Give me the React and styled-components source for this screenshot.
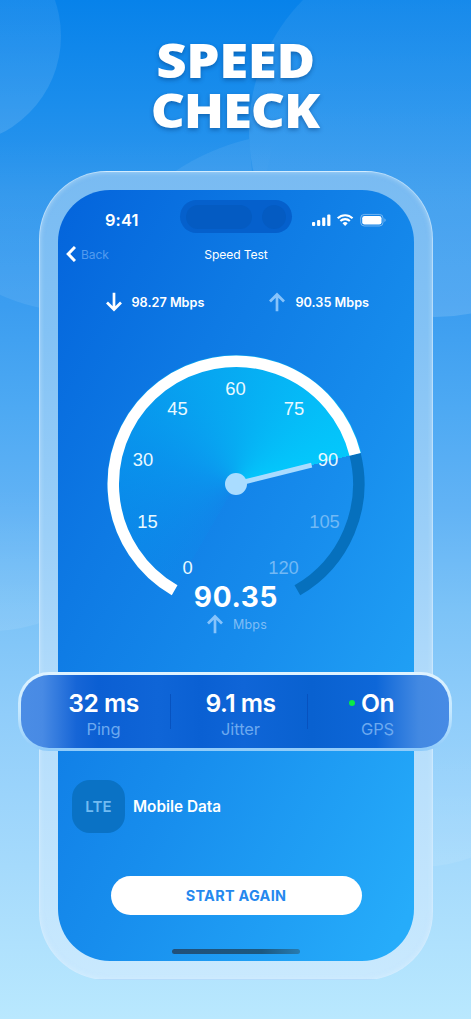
import React from 'react';
import styled, { createGlobalStyle } from 'styled-components';

const GlobalStyle = createGlobalStyle`
  * {
    box-sizing: border-box;
  }
  body {
    margin: 0;
    font-family: Inter, "Liberation Sans", sans-serif;
  }
`;

const Page = styled.main`
  position: relative;
  display: flex;
  flex-direction: column;
  align-items: center;
  width: 471px;
  height: 1019px;
  overflow: hidden;
  background: linear-gradient(
    180deg,
    #0782ea 0%,
    #1a8dec 10%,
    #3097ed 19%,
    #3b9df0 30%,
    #4da9f3 40%,
    #62b3f5 50%,
    #7cc3f7 60%,
    #90cdfa 70%,
    #a5dafc 85%,
    #b9e8fe 100%
  );
`;

const Backdrop = styled.svg`
  position: absolute;
  inset: 0;
`;

const Title = styled.h1`
  position: relative;
  display: flex;
  flex-direction: column;
  align-items: center;
  height: 171px;
  margin: 0;
  padding-top: 35px;
  color: #fff;
  font-family: "Open Sans", sans-serif;
  font-size: 47.5px;
  font-weight: 800;
  line-height: 50px;
  text-shadow: 0 2px 4px rgba(0, 50, 110, 0.45);
`;

const TitleLine = styled.span`
  letter-spacing: ${p => p.$tracking}px;
  margin-right: ${p => -p.$tracking}px;
  transform: scaleX(1.11);
`;

const Phone = styled.section`
  position: relative;
  width: 394px;
  height: 809px;
  padding: 18px;
  margin-left: 1px;
  border: 1px solid rgba(215, 238, 255, 0.65);
  border-radius: 68px;
  background: linear-gradient(180deg, #79bbf2 0%, #83c2f5 20%, #9bcff8 45%, #b3dcfb 65%, #c9e9fe 100%);
  box-shadow: inset 0 0 5px rgba(225, 243, 255, 0.5);
`;

const Screen = styled.div`
  display: flex;
  flex-direction: column;
  height: 771px;
  border-radius: 52px;
  background: linear-gradient(118deg, #0465dc 2%, #0e7ae4 30%, #178ded 57%, #26acfa 96%);
  color: #fff;
`;

const StatusBar = styled.div`
  display: flex;
  align-items: center;
  height: 33px;
  margin-top: 10px;
  padding: 0 26px 0 47px;
`;

const Clock = styled.span`
  width: 75px;
  padding-top: 7px;
  font-size: 16.4px;
  font-weight: 600;
  letter-spacing: 0.1px;
`;

const Island = styled.div`
  display: flex;
  align-items: center;
  justify-content: space-between;
  width: 113px;
  height: 33px;
  margin-right: 20px;
  padding: 4px 6px;
  border-radius: 17px;
  background: #0560cc;
`;

const Sensor = styled.i`
  width: ${p => p.$width}px;
  height: 24px;
  border-radius: 12px;
  background: #045bc2;
`;

const StatusDrawing = styled.svg`
  margin-top: 6px;
`;

const NavBar = styled.nav`
  display: grid;
  grid-template-columns: 1fr auto 1fr;
  align-items: center;
  height: 20px;
  margin-top: 11px;
  padding: 0 8px;
  font-size: 12.1px;
  letter-spacing: -0.1px;
`;

const BackLink = styled.span`
  display: flex;
  align-items: center;
  gap: 5px;
  color: rgba(160, 205, 255, 0.5);
`;

const Speeds = styled.div`
  display: flex;
  gap: 65px;
  height: 20px;
  margin-top: 28px;
  padding-left: 47.5px;
`;

const Speed = styled.div`
  display: flex;
  align-items: center;
  gap: 10px;
  font-size: 12.7px;
  font-weight: 600;
  white-space: nowrap;
`;

const Dial = styled.div`
  position: relative;
  width: 258px;
  height: 258px;
  margin: 43px 0 0 49px;
  border-radius: 50%;
  background: conic-gradient(
    from 210deg,
    rgba(3, 150, 238, 0.12) 0deg,
    rgba(5, 165, 243, 0.55) 75deg,
    rgba(5, 179, 244, 0.85) 150deg,
    rgba(3, 201, 252, 0.98) 226deg,
    transparent 226deg
  );
`;

const DialDrawing = styled.svg`
  display: block;
`;

const Reading = styled.div`
  position: relative;
  display: flex;
  flex-direction: column;
  align-items: center;
  margin-top: -34px;
`;

const ReadingValue = styled.strong`
  height: 36px;
  font-size: 28px;
  font-weight: 700;
  line-height: 36px;
  letter-spacing: 0.7px;
`;

const ReadingUnit = styled.span`
  display: flex;
  align-items: center;
  gap: 10px;
  height: 18px;
  padding-left: 2px;
  color: #7fbdf6;
  font-size: 12.5px;
  letter-spacing: 0.2px;
`;

const Network = styled.div`
  display: flex;
  align-items: center;
  gap: 8px;
  margin: 147px 0 0 14px;
  font-size: 15.3px;
  font-weight: 600;
`;

const NetworkBadge = styled.span`
  display: grid;
  place-items: center;
  width: 53px;
  height: 53px;
  border-radius: 18px;
  background: #0a72c5;
  color: #72bbf2;
  font-size: 15px;
  letter-spacing: 0.2px;
`;

const StartButton = styled.button`
  width: 251px;
  height: 39px;
  margin: 43px auto 0;
  padding: 0;
  border: 0;
  border-radius: 20px;
  background: #fff;
  color: #2588ee;
  font: 700 14.4px Inter, sans-serif;
  letter-spacing: 0.3px;
`;

const HomeIndicator = styled.div`
  width: 128px;
  height: 4.5px;
  margin: 34px auto 0;
  border-radius: 3px;
  background: linear-gradient(90deg, #21507a, #1c587f 70%, #277bb0);
`;

const Stats = styled.section`
  position: absolute;
  left: 18px;
  top: 672px;
  display: flex;
  align-items: center;
  width: 434px;
  height: 79px;
  padding-left: 13px;
  border: 3.5px solid transparent;
  border-radius: 31px;
  background:
    linear-gradient(90deg, #4b8de5 0, #488ae4 5%, #1665d6 13%, #0b5fd3 18%, #0f65d7 32%, #0a60d3 42%, #0f65d7 52%, #0961d0 68%, #0e67d8 83%, #4389e2 93%, #478be5 100%) padding-box,
    linear-gradient(180deg, #e0f3ff, #c4e8ff 50%, #8fcbfa) border-box;
`;

const Stat = styled.div`
  position: relative;
  display: flex;
  flex-direction: column;
  align-items: center;
  width: 137px;
  height: 52px;
  padding-left: 2px;

  &:not(:last-child)::after {
    content: '';
    position: absolute;
    right: 0;
    top: 8px;
    width: 1.5px;
    height: 35px;
    background: #0752bf;
  }
`;

const StatValue = styled.strong`
  position: relative;
  color: #fff;
  font-size: 24.7px;
  font-weight: 600;
  line-height: 30px;
  letter-spacing: -0.5px;
  margin-top: 2.5px;
`;

const StatLabel = styled.span`
  color: #6ca9ef;
  font-size: 16.5px;
  line-height: 22px;
  letter-spacing: -0.1px;
  margin-top: -0.5px;
`;

const GpsDot = styled.i`
  position: absolute;
  left: -12px;
  top: 12px;
  width: 6px;
  height: 6px;
  border-radius: 50%;
  background: #0bea45;
`;

const ticks = [
  { label: '0', x: 80.5, y: 212 },
  { label: '15', x: 40.5, y: 166 },
  { label: '30', x: 36, y: 104 },
  { label: '45', x: 70.5, y: 53 },
  { label: '60', x: 128.5, y: 33 },
  { label: '75', x: 187, y: 53 },
  { label: '90', x: 221, y: 104 },
  { label: '105', x: 217.5, y: 166, dim: true },
  { label: '120', x: 176.5, y: 212, dim: true },
];

const polar = (deg, r) => {
  const a = (deg * Math.PI) / 180;
  return `${129 + r * Math.sin(a)} ${129 - r * Math.cos(a)}`;
};

const stats = [
  { value: '32 ms', label: 'Ping' },
  { value: '9.1 ms', label: 'Jitter' },
  { value: 'On', label: 'GPS', dot: true },
];

const Arrow = ({ down, color = '#fff' }) => (
  <svg width="16" height="20" viewBox="0 0 16 20" fill="none" stroke={color} strokeWidth="2.7">
    {down ? <path d="M8 .8v16.8M1 10.5l7 7 7-7" /> : <path d="M8 19.2V2.4M1 9.5l7-7 7 7" />}
  </svg>
);

const Bubbles = () => (
  <Backdrop width="471" height="1019" viewBox="0 0 471 1019">
    <defs>
      <linearGradient id="bubble" x1="0" y1="0" x2="0" y2="1">
        <stop offset="0" stopColor="#fff" stopOpacity=".05" />
        <stop offset="1" stopColor="#fff" stopOpacity=".13" />
      </linearGradient>
      <linearGradient id="fade" x1="0" y1="0" x2="0" y2="1">
        <stop offset=".55" stopColor="#fff" stopOpacity="0" />
        <stop offset="1" stopColor="#fff" stopOpacity=".08" />
      </linearGradient>
    </defs>
    <circle cx="-48" cy="36" r="109" fill="url(#bubble)" />
    <path d="M174 172Q208 149 249 139L252 172z" fill="#fff" fillOpacity=".07" />
    <circle cx="435" cy="131" r="186" fill="url(#bubble)" />
    <circle cx="80" cy="118" r="194" fill="url(#fade)" />
    <circle cx="-10" cy="470" r="161" fill="url(#fade)" />
    <circle cx="420" cy="727" r="140" fill="url(#fade)" />
  </Backdrop>
);

const StatusIcons = () => (
  <StatusDrawing width="76" height="14" viewBox="0 0 76 14" fill="#fff">
    <rect x="0" y="9" width="3.2" height="4" rx="1" />
    <rect x="5.1" y="7" width="3.2" height="6" rx="1" />
    <rect x="10.2" y="4.5" width="3.2" height="8.5" rx="1" />
    <rect x="15.3" y="1.5" width="3.2" height="11.5" rx="1" />
    <g fill="none" stroke="#fff" strokeWidth="2.1">
      <path d="M25.8 5.3a10.6 10.6 0 0 1 14.9 0" />
      <path d="M28.5 8.1a6.8 6.8 0 0 1 9.5 0" />
    </g>
    <path d="M33.25 13l-2.6-2.7a3.7 3.7 0 0 1 5.2 0z" />
    <rect x="48.9" y="1.4" width="22.4" height="11.6" rx="3.6" fill="none" stroke="#fff" strokeOpacity=".4" />
    <rect x="50.4" y="2.9" width="19.4" height="8.6" rx="2.3" />
    <path d="M72.7 5.3c1.6.6 1.6 3.2 0 3.8z" fillOpacity=".45" />
  </StatusDrawing>
);

const Gauge = () => (
  <Dial>
    <DialDrawing width="258" height="258" viewBox="0 0 258 258">
      <g fill="none" strokeWidth="11.5">
        <path d={`M${polar(76, 122.75)}A122.75 122.75 0 0 1 ${polar(150, 122.75)}`} stroke="#0670bd" />
        <path d={`M${polar(210, 122.75)}A122.75 122.75 0 1 1 ${polar(76, 122.75)}`} stroke="#fff" />
      </g>
      <path d={`M129 129L${polar(76, 78)}`} stroke="#a9dcff" strokeWidth="5" />
      <circle cx="129" cy="129" r="11" fill="#a9dcff" />
      <g fontFamily="Liberation Sans, sans-serif" fontSize="18.4" textAnchor="middle">
        {ticks.map(t => (
          <text key={t.label} x={t.x} y={t.y + 6.5} fill={t.dim ? '#72b9f5' : '#e9f9ff'}>
            {t.label}
          </text>
        ))}
      </g>
    </DialDrawing>
  </Dial>
);

const App = () => {
  return (
    <>
      <GlobalStyle />
      <Page>
        <Bubbles />
        <Title>
          <TitleLine $tracking={-0.3}>SPEED</TitleLine>
          <TitleLine $tracking={-1}>CHECK</TitleLine>
        </Title>
        <Phone>
          <Screen>
            <StatusBar>
              <Clock>9:41</Clock>
              <Island>
                <Sensor $width={66} />
                <Sensor $width={24} />
              </Island>
              <StatusIcons />
            </StatusBar>
            <NavBar>
              <BackLink>
                <svg width="10" height="16" viewBox="0 0 10 16" fill="none" stroke="#fff" strokeWidth="3">
                  <path d="M9 1L2.2 8 9 15" />
                </svg>
                Back
              </BackLink>
              <span>Speed Test</span>
            </NavBar>
            <Speeds>
              <Speed><Arrow down />98.27 Mbps</Speed>
              <Speed><Arrow color="#86c3fb" />90.35 Mbps</Speed>
            </Speeds>
            <Gauge />
            <Reading>
              <ReadingValue>90.35</ReadingValue>
              <ReadingUnit><Arrow color="#86c3fb" />Mbps</ReadingUnit>
            </Reading>
            <Network>
              <NetworkBadge>LTE</NetworkBadge>
              Mobile Data
            </Network>
            <StartButton>START AGAIN</StartButton>
            <HomeIndicator />
          </Screen>
        </Phone>
        <Stats>
          {stats.map(s => (
            <Stat key={s.label}>
              <StatValue>
                {s.dot && <GpsDot />}
                {s.value}
              </StatValue>
              <StatLabel>{s.label}</StatLabel>
            </Stat>
          ))}
        </Stats>
      </Page>
    </>
  );
};

export default App;
